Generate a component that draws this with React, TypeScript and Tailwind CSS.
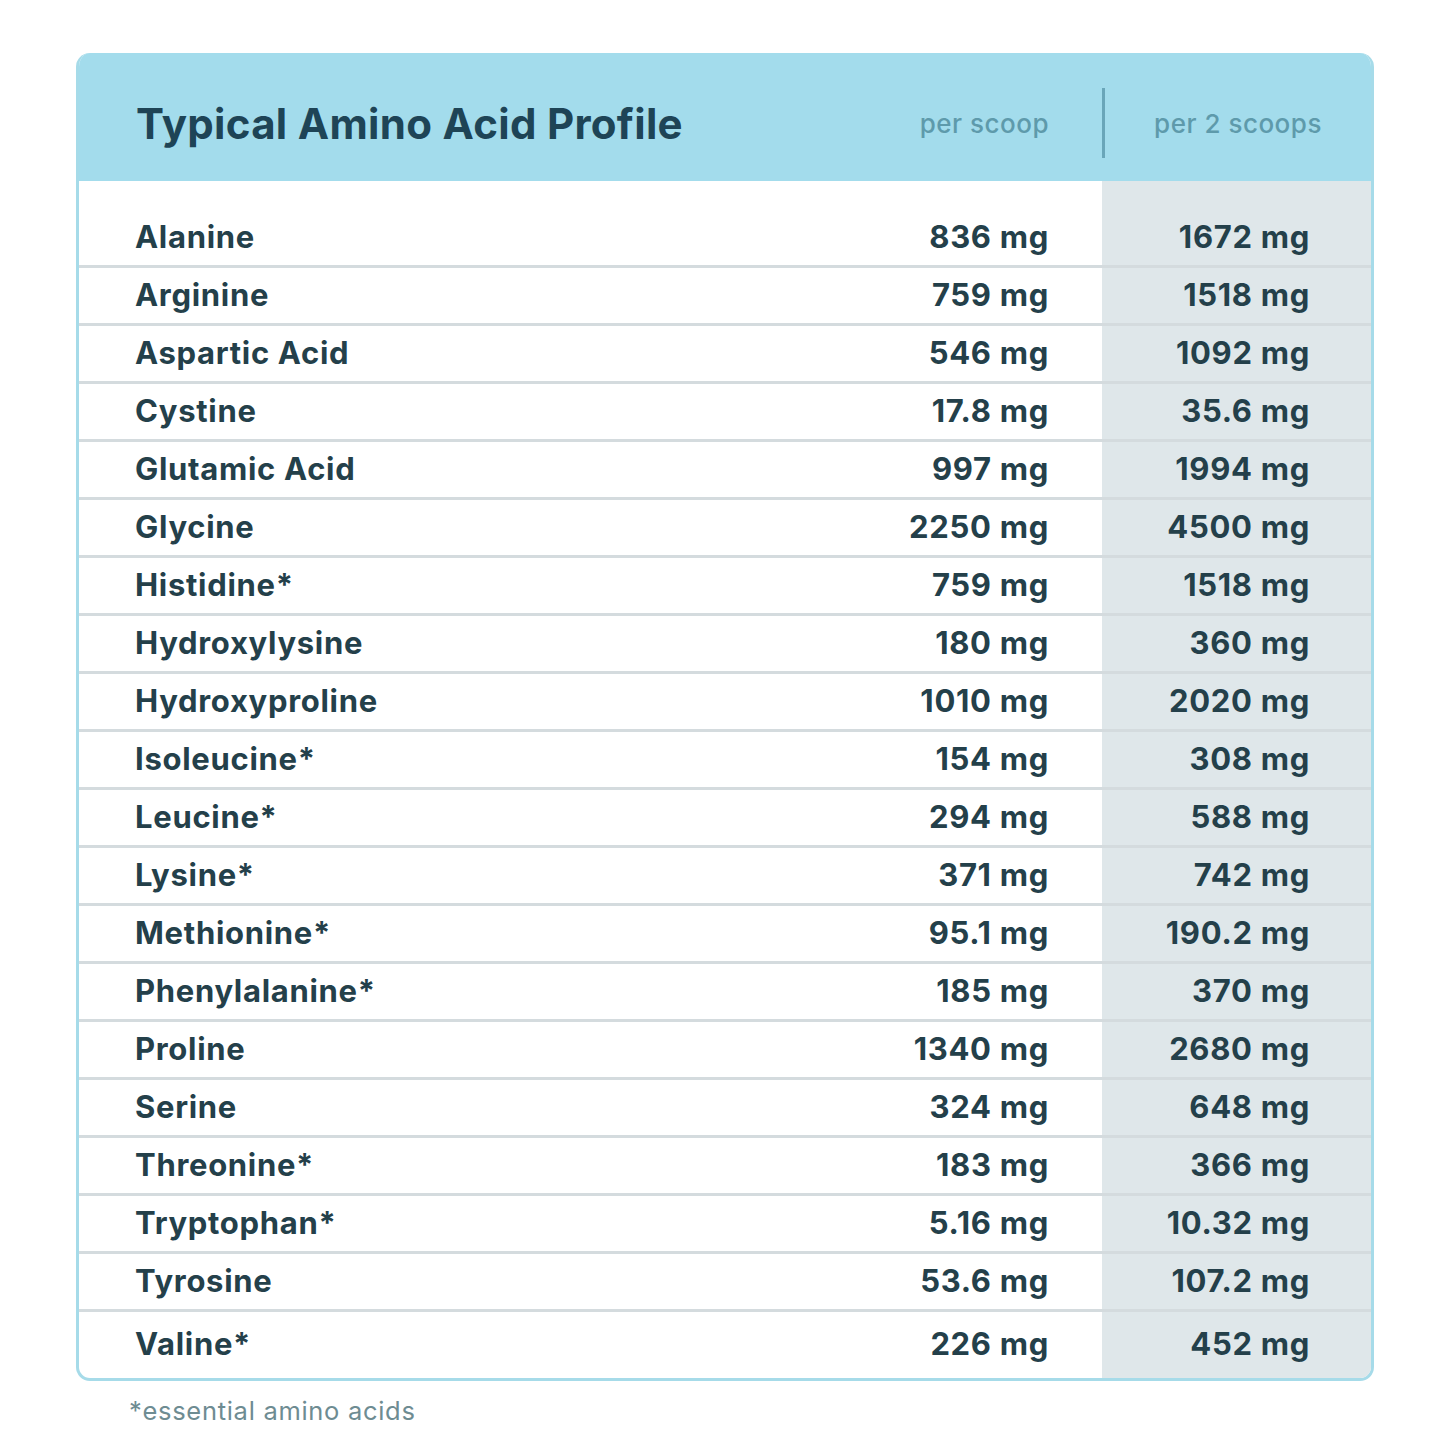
const rows: [string, string, string][] = [
  ["Alanine", "836 mg", "1672 mg"],
  ["Arginine", "759 mg", "1518 mg"],
  ["Aspartic Acid", "546 mg", "1092 mg"],
  ["Cystine", "17.8 mg", "35.6 mg"],
  ["Glutamic Acid", "997 mg", "1994 mg"],
  ["Glycine", "2250 mg", "4500 mg"],
  ["Histidine*", "759 mg", "1518 mg"],
  ["Hydroxylysine", "180 mg", "360 mg"],
  ["Hydroxyproline", "1010 mg", "2020 mg"],
  ["Isoleucine*", "154 mg", "308 mg"],
  ["Leucine*", "294 mg", "588 mg"],
  ["Lysine*", "371 mg", "742 mg"],
  ["Methionine*", "95.1 mg", "190.2 mg"],
  ["Phenylalanine*", "185 mg", "370 mg"],
  ["Proline", "1340 mg", "2680 mg"],
  ["Serine", "324 mg", "648 mg"],
  ["Threonine*", "183 mg", "366 mg"],
  ["Tryptophan*", "5.16 mg", "10.32 mg"],
  ["Tyrosine", "53.6 mg", "107.2 mg"],
  ["Valine*", "226 mg", "452 mg"],
];

export default function App() {
  return (
    <div className="min-h-[1450px] bg-white pt-[53px] font-['Inter',sans-serif]">
      <div className="mx-auto w-[1298px]">
        <div className="overflow-hidden rounded-[14px] border-[3px] border-t-0 border-[#a6dbe9] bg-white">
          {/* Header */}
          <div className="flex h-[128px] items-center bg-[#a3dcec] pt-[12px]">
            <h1 className="flex-1 pl-[57px] text-[42px] font-bold tracking-[0.3px] text-[#1e4456]">
              Typical Amino Acid Profile
            </h1>
            <div className="w-[200px] pr-[53px] text-right text-[26px] font-medium tracking-[0.5px] text-[#5e9aab]">
              per scoop
            </div>
            <div className="flex w-[269px] items-center">
              <div className="h-[70px] w-[3px] bg-[#6aa6b9]" />
              <div className="flex-1 text-center text-[26px] font-medium tracking-[0.5px] text-[#5e9aab]">
                per 2 scoops
              </div>
            </div>
          </div>

          {/* Body */}
          <div>
            {rows.map(([name, one, two], i) => {
              const first = i === 0;
              const last = i === rows.length - 1;
              const h = first ? "h-[84px] pt-[29px]" : last ? "h-[66px] pb-[2px]" : "h-[55px]";
              return (
                <div
                  key={name}
                  className={`flex text-[31px] font-bold tracking-[0.7px] text-[#24404a] ${
                    last ? "" : "border-b-[3px] border-[#55707a]/25"
                  }`}
                >
                  <div className={`flex flex-1 items-center pl-[56px] ${h}`}>{name}</div>
                  <div className={`flex w-[220px] items-center justify-end pr-[53px] ${h}`}>{one}</div>
                  <div className={`flex w-[269px] items-center justify-end bg-[#dfe7ea] pr-[61px] ${h}`}>
                    {two}
                  </div>
                </div>
              );
            })}
          </div>
        </div>
        <p className="mt-[11px] pl-[53px] text-[25.5px] tracking-[0.7px] text-[#6e8c92]">
          *essential amino acids
        </p>
      </div>
    </div>
  );
}
